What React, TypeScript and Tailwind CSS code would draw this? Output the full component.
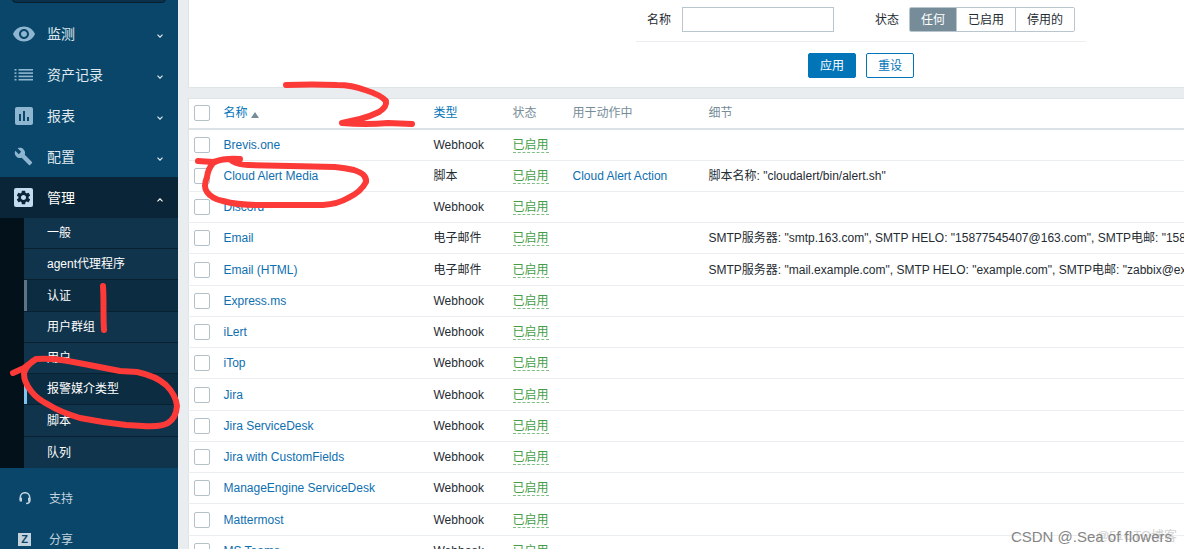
import { useState } from "react";
import { MdAssessment, MdBuild, MdSettings, MdVisibility } from "react-icons/md";

const ListIcon = () => (
    <svg width="20" height="14" viewBox="0 0 20 14" fill="currentColor">
        {[1, 4.3, 7.6, 10.9].map((y) => (
            <g key={y}>
                <rect x="0.5" y={y} width="2" height="1.6" />
                <rect x="4.5" y={y} width="14.5" height="1.6" />
            </g>
        ))}
    </svg>
);

const GearIcon = () => (
    <span className="flex size-[19px] items-center justify-center rounded-xs bg-[#c3dcef] text-[#0a2537]">
        <MdSettings size={17} />
    </span>
);

const HeadsetIcon = () => (
    <svg width="12" height="13" viewBox="0 0 12 13" fill="none" stroke="currentColor">
        <path d="M1.3 8V5.4a4.7 4.7 0 0 1 9.4 0v3.4c0 1.7-1.4 2.7-3.6 2.8" strokeWidth="1.5" />
        <path d="M1.8 5.8v3.6M10.2 5.8v3.6" strokeWidth="2.4" />
    </svg>
);

const Chevron = ({ up }) => (
    <svg className="mt-1 ml-auto" width="6" height="4" viewBox="0 0 6 4" fill="none" stroke="currentColor" strokeWidth="1.2">
        <path d={up ? "M0.5 3.3 3 0.8l2.5 2.5" : "M0.5 0.7 3 3.2 5.5 0.7"} />
    </svg>
);

const menu = [
    { label: "监测", icon: <MdVisibility size={24} /> },
    { label: "资产记录", icon: <ListIcon /> },
    { label: "报表", icon: <MdAssessment size={24} /> },
    { label: "配置", icon: <MdBuild size={19} /> },
    { label: "管理", icon: <GearIcon />, active: true },
];

const submenu = [
    { label: "一般" },
    { label: "agent代理程序" },
    { label: "认证", className: "border-l-3 border-l-[#5c7486] bg-[#0c2c41]" },
    { label: "用户群组" },
    { label: "用户" },
    { label: "报警媒介类型", className: "border-l-3 border-l-[#7fc4f0] bg-[#0c2c41]" },
    { label: "脚本" },
    { label: "队列" },
];

const mediaTypes = [
    { name: "Brevis.one", type: "Webhook" },
    { name: "Cloud Alert Media", type: "脚本", action: "Cloud Alert Action", details: '脚本名称: "cloudalert/bin/alert.sh"' },
    { name: "Discord", type: "Webhook" },
    { name: "Email", type: "电子邮件", details: 'SMTP服务器: "smtp.163.com", SMTP HELO: "15877545407@163.com", SMTP电邮: "15877545407@163.com"' },
    { name: "Email (HTML)", type: "电子邮件", details: 'SMTP服务器: "mail.example.com", SMTP HELO: "example.com", SMTP电邮: "zabbix@example.com"' },
    { name: "Express.ms", type: "Webhook" },
    { name: "iLert", type: "Webhook" },
    { name: "iTop", type: "Webhook" },
    { name: "Jira", type: "Webhook" },
    { name: "Jira ServiceDesk", type: "Webhook" },
    { name: "Jira with CustomFields", type: "Webhook" },
    { name: "ManageEngine ServiceDesk", type: "Webhook" },
    { name: "Mattermost", type: "Webhook" },
    { name: "MS Teams", type: "Webhook" },
];

const statusOptions = ["任何", "已启用", "停用的"];

const Sidebar = () => (
    <aside className="w-[178px] shrink-0 overflow-hidden bg-[#0a466a] text-[#dfe8ee]">
        <div className="-mt-[21px] px-3">
            <input
                type="search"
                aria-label="搜索"
                className="block h-6 w-full rounded-sm border border-[#061e2e] bg-[#0a304a] outline-none"
            />
        </div>
        <nav className="mt-[10px]">
            {menu.map((item) => (
                <a
                    key={item.label}
                    href="#"
                    className={`flex h-[41px] items-center pr-[15px] text-sm ${item.active ? "bg-[#0a2537] text-white" : ""}`}
                >
                    <span className="flex w-[47px] justify-center text-[#8fb6d0]">{item.icon}</span>
                    {item.label}
                    <Chevron up={item.active} />
                </a>
            ))}
            <ul className="bg-[#03111b] pl-6">
                {submenu.map((item) => (
                    <li key={item.label} className="h-[31px] border-b border-[#08202f] bg-[#10344c] last:border-b-0 nth-[4n+3]:h-8">
                        <a href="#" className={`flex h-full items-center text-white ${item.className ? `pl-5 ${item.className}` : "pl-[23px]"}`}>
                            {item.label}
                        </a>
                    </li>
                ))}
            </ul>
        </nav>
        <nav className="mt-[10px] text-[#c3d3de]">
            <a href="#" className="flex h-[41px] items-center">
                <span className="flex w-[49px] justify-center">
                    <HeadsetIcon />
                </span>
                支持
            </a>
            <a href="#" className="flex h-[41px] items-center">
                <span className="flex w-[49px] justify-center">
                    <b className="flex size-[13px] items-center justify-center bg-[#c3d3de] text-[11px] text-[#0a466a]">Z</b>
                </span>
                分享
            </a>
        </nav>
    </aside>
);

const Filter = () => {
    const [status, setStatus] = useState("任何");

    return (
        <form className="flex justify-end border-b border-l border-[#dfe4e7] bg-white pt-[7px] pr-[98px] pb-[9px]">
            <div className="w-[450px]">
                <div className="flex items-center border-b border-[#ebeef0] pb-[9px] pl-[11px]">
                    <label htmlFor="name" className="mr-[11px]">名称</label>
                    <input id="name" type="text" className="h-[25px] w-[152px] border border-[#b9c6ce] px-1 outline-none" />
                    <span id="status" className="mr-[10px] ml-[41px]">状态</span>
                    <div role="group" aria-labelledby="status" className="flex h-[25px] overflow-hidden rounded-xs border border-[#b9c6ce]">
                        {statusOptions.map((option) => (
                            <button
                                key={option}
                                type="button"
                                onClick={() => setStatus(option)}
                                className={`border-r border-[#b9c6ce] px-[11px] last:border-r-0 ${status === option ? "bg-[#768d99] text-white" : "bg-white"}`}
                            >
                                {option}
                            </button>
                        ))}
                    </div>
                </div>
                <div className="mt-[11px] flex justify-center gap-[10px]">
                    <button type="button" className="h-[25px] rounded-xs border border-[#0275b8] bg-[#0275b8] px-[11px] text-white">应用</button>
                    <button type="button" className="h-[25px] rounded-xs border border-[#0275b8] bg-white px-[11px] text-[#0275b8]">重设</button>
                </div>
            </div>
        </form>
    );
};

const Checkbox = ({ label }) => (
    <input
        type="checkbox"
        aria-label={label}
        className="ml-[5px] block size-4 appearance-none rounded-xs border border-[#b4c1c9] bg-white checked:bg-[#0275b8]"
    />
);

const MediaTable = () => (
    <table className="mt-[10px] w-full table-fixed border-t border-l border-[#dfe4e7] bg-white text-left whitespace-nowrap">
        <colgroup>
            <col className="w-[35px]" />
            <col className="w-[210px]" />
            <col className="w-[79px]" />
            <col className="w-[60px]" />
            <col className="w-[136px]" />
            <col />
        </colgroup>
        <thead>
            <tr className="h-[30px] border-b-2 border-[#dce2e5] text-[#768d99] [&>th]:p-0 [&>th]:font-normal">
                <th><Checkbox label="全选" /></th>
                <th>
                    <a href="#" className="flex items-center gap-[3px] text-[#0275b8]">
                        名称
                        <svg className="mt-[3px]" width="8" height="6" viewBox="0 0 8 6" fill="#768d99">
                            <path d="M4 0l4 6H0z" />
                        </svg>
                    </a>
                </th>
                <th><a href="#" className="text-[#0275b8]">类型</a></th>
                <th>状态</th>
                <th>用于动作中</th>
                <th>细节</th>
            </tr>
        </thead>
        <tbody>
            {mediaTypes.map((media) => (
                <tr key={media.name} className="h-[31px] border-b border-[#ebeef0] nth-[4n+1]:h-8 [&>td]:p-0">
                    <td><Checkbox label={media.name} /></td>
                    <td><a href="#" className="text-[#0e6fb0]">{media.name}</a></td>
                    <td>{media.type}</td>
                    <td>
                        <a href="#" className="inline-block border-b border-dashed border-[#81bd84] leading-[14px] text-[#429e47]">已启用</a>
                    </td>
                    <td>{media.action && <a href="#" className="text-[#0e6fb0]">{media.action}</a>}</td>
                    <td>{media.details}</td>
                </tr>
            ))}
        </tbody>
    </table>
);

// Hand-drawn red marks for the three steps
const Marks = () => (
    <svg
        className="pointer-events-none absolute top-0 left-0"
        width="430"
        height="440"
        fill="none"
        stroke="#fc3a38"
        strokeWidth="6"
        strokeLinecap="round"
        strokeLinejoin="round"
    >
        <path d="M103 286C104 300 103 316 104 330" />
        <path d="M13 373L24 368L36 359Q52 358 68 361L84 364L120 371L137 372Q156 376 166 385Q176 395 177 406Q176 418 168 423Q162 427 143 426L126 425L103 422L80 418Q60 412 49 405Q37 399 31 391Q24 382 24 374Q25 367 33 361" />
        <path d="M286 85Q312 84 337 85Q352 85 365 90Q381 95 386 101Q387 107 379 112Q371 116 360 119L342 123Q366 125 388 123L412 124" />
        <path d="M198 161L213 162Q225 158 240 159M232 159Q219 159 213 163Q208 169 207 177Q203 187 207 192Q212 199 223 201Q237 205 257 205L323 205Q338 204 348 198Q361 192 366 182Q367 174 354 170Q345 168 335 167L290 166L248 165Q239 165 232 161" />
    </svg>
);

export default function App() {
    return (
        <div className="relative flex h-screen overflow-hidden bg-[#e9edf0] font-['Liberation_Sans','Noto_Sans_CJK_SC',sans-serif] text-xs text-[#1f2c33]">
            <Sidebar />
            <main className="ml-[10px] min-w-0 flex-1">
                <Filter />
                <MediaTable />
            </main>
            <Marks />
            <span className="absolute right-[7px] bottom-[5px] text-[13px] text-[#d3d3d3]">@51CTO博客</span>
            <span className="absolute right-3 bottom-[2px] text-[15px] text-[#858585]">CSDN @.Sea of flowers</span>
        </div>
    );
}
